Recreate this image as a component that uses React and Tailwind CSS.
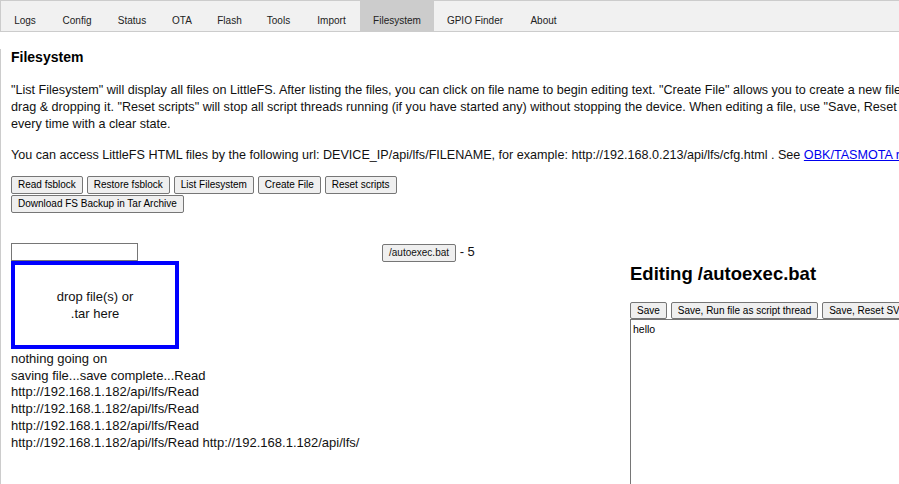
import React from 'react';

const tabs = [
  { name: 'Logs', w: 'w-[48px]' },
  { name: 'Config', w: 'w-[56px]' },
  { name: 'Status', w: 'w-[54px]' },
  { name: 'OTA', w: 'w-[46px]' },
  { name: 'Flash', w: 'w-[49px]' },
  { name: 'Tools', w: 'w-[49px]' },
  { name: 'Import', w: 'w-[57px]' },
  { name: 'Filesystem', w: 'w-[74px]', active: true },
  { name: 'GPIO Finder', w: 'w-[82px]' },
  { name: 'About', w: 'w-[55px]' },
];

const logLines = [
  'nothing going on',
  'saving file...save complete...Read',
  'http://192.168.1.182/api/lfs/Read',
  'http://192.168.1.182/api/lfs/Read',
  'http://192.168.1.182/api/lfs/Read',
  'http://192.168.1.182/api/lfs/Read http://192.168.1.182/api/lfs/',
];

const Btn = ({ children, h = 'h-[18px]' }) => (
  <button
    className={`${h} inline-flex items-center border border-[#767676] bg-[#efefef] px-[6px] text-[10px] leading-[12px] text-black rounded-[2px] whitespace-nowrap`}
  >
    {children}
  </button>
);

const App = () => {
  return (
    <div className="h-[484px] w-full overflow-hidden bg-white font-['Liberation_Sans',Arial,sans-serif] text-[#111]">
      <div className="w-[1400px]">
        {/* Tabs */}
        <div className="flex h-[32px] border border-[#ccc] bg-[#f1f1f1]">
          {tabs.map((t) => (
            <div
              key={t.name}
              className={`${t.w} flex h-full items-center justify-center pt-[8px] text-[10px] text-[#222] ${
                t.active ? 'bg-[#ccc]' : ''
              }`}
            >
              {t.name}
            </div>
          ))}
        </div>

        {/* Tab content */}
        <div className="h-[460px] border-l border-[#ccc] pl-[10px] text-[12.6px] leading-[17px]">
          <h3 className="mt-[17px] text-[14px] font-bold leading-[17px] text-black">Filesystem</h3>

          <div className="mt-[16px] whitespace-nowrap">
            <div>
              "List Filesystem" will display all files on LittleFS. After listing the files, you can click on file name to begin editing text. "Create File" allows you to create a new file. You can also upload files by
            </div>
            <div>
              drag &amp; dropping it. "Reset scripts" will stop all script threads running (if you have started any) without stopping the device. When editing a file, use "Save, Reset SVM and run file as script thread" to restart scripts
            </div>
            <div>every time with a clear state.</div>
          </div>

          <p className="mt-[14px] whitespace-nowrap">
            You can access LittleFS HTML files by the following url: DEVICE_IP/api/lfs/FILENAME, for example: http://192.168.0.213/api/lfs/cfg.html . See{' '}
            <a className="text-[#0000ee] underline">OBK/TASMOTA rest interface</a>
          </p>

          <div className="mt-[12px] flex gap-[4px]">
            <Btn>Read fsblock</Btn>
            <Btn>Restore fsblock</Btn>
            <Btn>List Filesystem</Btn>
            <Btn>Create File</Btn>
            <Btn>Reset scripts</Btn>
          </div>
          <div className="mt-[1px] flex">
            <Btn>Download FS Backup in Tar Archive</Btn>
          </div>

          <div className="mt-[30px] flex">
            {/* Left column */}
            <div className="w-[371px]">
              <input
                type="text"
                className="block h-[18px] w-[127px] border border-[#767676] bg-white px-[2px] text-[11px]"
              />
              <div className="flex h-[88px] w-[168px] flex-col items-center justify-center border-[4px] border-[#0000ff] text-center text-[13px] leading-[17px]">
                <div>drop file(s) or</div>
                <div>.tar here</div>
              </div>
              <div className="mt-[2px] whitespace-nowrap text-[13px] leading-[16.7px]">
                {logLines.map((l, i) => (
                  <div key={i}>{l}</div>
                ))}
              </div>
            </div>

            {/* Middle column */}
            <div className="w-[248px] whitespace-nowrap text-[13px]">
              <button className="inline-block h-[18px] border border-[#767676] bg-[#efefef] px-[6px] align-baseline text-[10px] leading-[12px] rounded-[2px]">
                /autoexec.bat
              </button>{' '}
              - 5
            </div>

            {/* Right column */}
            <div className="flex-1">
              <h2 className="mt-[20px] text-[18.5px] font-bold leading-[22px] text-black">Editing /autoexec.bat</h2>
              <div className="mt-[17px] flex gap-[4px]">
                <Btn h="h-[17px]">Save</Btn>
                <Btn h="h-[17px]">Save, Run file as script thread</Btn>
                <Btn h="h-[17px]">Save, Reset SVM and run file as script thread</Btn>
              </div>
              <textarea
                defaultValue="hello"
                className="block h-[240px] w-[600px] resize-none border border-[#767676] px-[2px] pt-[3px] text-[10.5px] leading-[12px] text-black outline-none"
              />
            </div>
          </div>
        </div>
      </div>
    </div>
  );
};

export default App;
